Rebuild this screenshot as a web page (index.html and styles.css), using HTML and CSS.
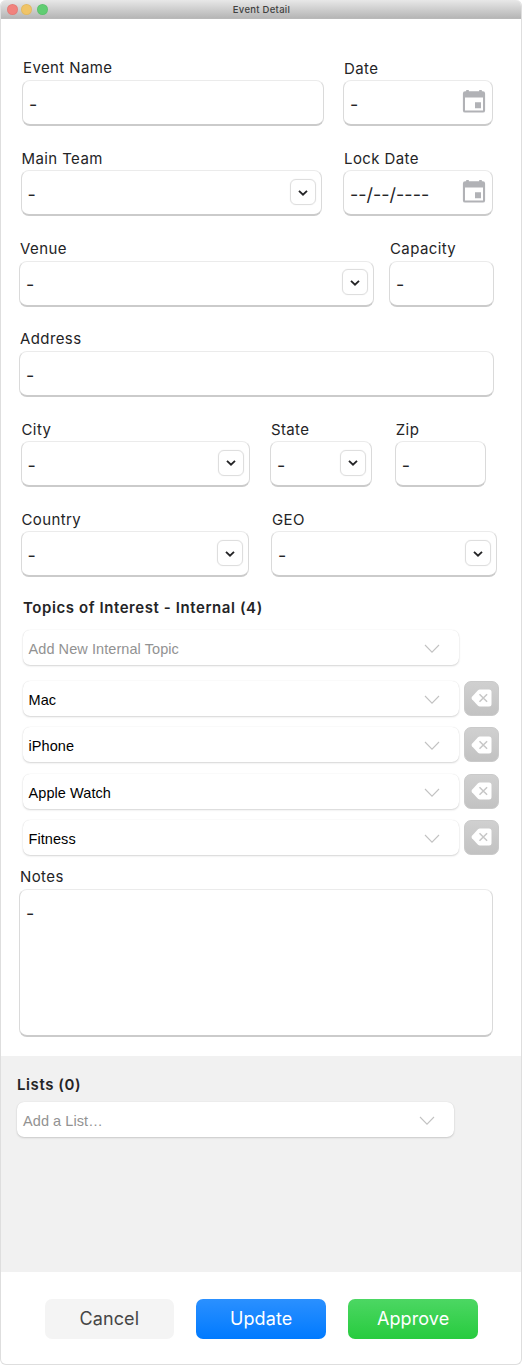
FILE: index.html
```
<!DOCTYPE html>
<html lang="en">
<head>
<meta charset="utf-8">
<title>Event Detail</title>
<link rel="stylesheet" href="styles.css">
</head>
<body>
<svg class="defs" aria-hidden="true">
  <symbol id="calendar" viewBox="0 0 24 24"><path fill="currentColor" d="M4.2 0.9h2.6v1.3h10.4V.9h2.6v1.3h1.1A2.2 2.2 0 0 1 23.1 4.4v17a2.2 2.2 0 0 1-2.2 2.2H3.1a2.2 2.2 0 0 1-2.2-2.2v-17a2.2 2.2 0 0 1 2.2-2.2h1.1zM3 8.5v13h18v-13zM13 13.3h6v6h-6z" fill-rule="evenodd"/></symbol>
  <symbol id="chevron-small" viewBox="0 0 10 6"><path d="M1 .9 5 4.6 9 .9" fill="none" stroke="currentColor" stroke-width="1.9"/></symbol>
  <symbol id="chevron" viewBox="0 0 16 10"><path d="M1 1 8 8.2 15 1" fill="none" stroke="currentColor" stroke-width="1.1"/></symbol>
  <symbol id="erase" viewBox="0 0 22 18"><path d="M8.8.5H18a2.5 2.5 0 0 1 2.5 2.5v12A2.5 2.5 0 0 1 18 17.5H8.8Q7.8 17.5 7 16.7L1 10.2Q0 9 1 7.8L7 1.3Q7.8.5 8.8.5z" fill="#fff"/><path d="m8.5 5.2 7.6 7.6m0-7.6-7.6 7.6" stroke="#c7c7c7" stroke-width="1.5"/></symbol>
</svg>
<div class="window">
  <header class="titlebar">
    <div class="lights"><i class="light close"></i><i class="light min"></i><i class="light max"></i></div>
    <span class="title">Event Detail</span>
  </header>
  <main class="form">
    <div class="row row-name">
      <div class="field name"><label>Event Name</label><div class="box">-</div></div>
      <div class="field date"><label>Date</label><div class="box">-<svg class="cal"><use href="#calendar"/></svg></div></div>
    </div>
    <div class="row row-team">
      <div class="field"><label>Main Team</label><div class="box">-<span class="drop"><svg><use href="#chevron-small"/></svg></span></div></div>
      <div class="field"><label>Lock Date</label><div class="box"><span class="mask">--/--/----</span><svg class="cal"><use href="#calendar"/></svg></div></div>
    </div>
    <div class="row row-venue">
      <div class="field"><label>Venue</label><div class="box">-<span class="drop"><svg><use href="#chevron-small"/></svg></span></div></div>
      <div class="field"><label>Capacity</label><div class="box">-</div></div>
    </div>
    <div class="row row-address">
      <div class="field"><label>Address</label><div class="box">-</div></div>
    </div>
    <div class="row row-city">
      <div class="field"><label>City</label><div class="box">-<span class="drop"><svg><use href="#chevron-small"/></svg></span></div></div>
      <div class="field"><label>State</label><div class="box">-<span class="drop"><svg><use href="#chevron-small"/></svg></span></div></div>
      <div class="field"><label>Zip</label><div class="box">-</div></div>
    </div>
    <div class="row row-country">
      <div class="field"><label>Country</label><div class="box">-<span class="drop"><svg><use href="#chevron-small"/></svg></span></div></div>
      <div class="field"><label>GEO</label><div class="box">-<span class="drop"><svg><use href="#chevron-small"/></svg></span></div></div>
    </div>
    <section class="topics">
      <h2>Topics of Interest - Internal (4)</h2>
      <div class="select placeholder">Add New Internal Topic<svg><use href="#chevron"/></svg></div>
      <ul class="topic-list">
        <li><div class="select">Mac<svg><use href="#chevron"/></svg></div><button class="remove"><svg><use href="#erase"/></svg></button></li>
        <li><div class="select">iPhone<svg><use href="#chevron"/></svg></div><button class="remove"><svg><use href="#erase"/></svg></button></li>
        <li><div class="select">Apple Watch<svg><use href="#chevron"/></svg></div><button class="remove"><svg><use href="#erase"/></svg></button></li>
        <li><div class="select">Fitness<svg><use href="#chevron"/></svg></div><button class="remove"><svg><use href="#erase"/></svg></button></li>
      </ul>
    </section>
    <div class="field notes"><label>Notes</label><div class="box">-</div></div>
  </main>
  <section class="lists">
    <h2>Lists (0)</h2>
    <div class="select placeholder">Add a List…<svg><use href="#chevron"/></svg></div>
  </section>
  <footer class="actions">
    <button class="btn cancel">Cancel</button>
    <button class="btn update">Update</button>
    <button class="btn approve">Approve</button>
  </footer>
</div>
</body>
</html>
```
FILE: styles.css
```
* { box-sizing: border-box; }
body { margin: 0; background: #fff; font-family: Inter, "Liberation Sans", sans-serif; color: #242426; }
.defs { position: absolute; width: 0; height: 0; }
.window { width: 522px; height: 1365px; border: 1px solid #dedede; border-top: 0; border-radius: 6px; overflow: hidden; display: flex; flex-direction: column; }

.titlebar { flex: none; height: 19px; margin: 0 -1px; display: grid; grid-template-columns: 60px 1fr 60px; align-items: center; background: linear-gradient(#e8e8e8, #b6b6b6); border-bottom: 1px solid #b9b9b9; }
.lights { display: flex; padding-left: 7px; }
.light { width: 11px; height: 11px; border-radius: 50%; border: 1px solid rgba(0, 0, 0, .05); }
.close { background: #f1827d; margin-right: 3px; }
.min { background: #f0c467; margin-right: 5px; }
.max { background: #60cd72; }
.title { font-size: 9.5px; font-weight: 500; letter-spacing: .28px; color: #404040; text-align: center; padding-left: 1px; }

.form { flex: none; height: 1036.5px; padding-top: 37px; }
.row { display: grid; margin-bottom: 20.3px; }
.row-name { grid-template-columns: 302px 150px; column-gap: 19px; padding-left: 21px; }
.row-team { grid-template-columns: 301.5px 150px; column-gap: 21px; padding-left: 19.5px; }
.row-venue { grid-template-columns: 355px 105.4px; column-gap: 15px; padding-left: 18px; }
.row-address { grid-template-columns: 475.4px; padding-left: 18px; }
.row-city { grid-template-columns: 229.9px 102.4px 91px; column-gap: 19.5px; padding-left: 19.5px; }
.row-city .field:last-child { margin-left: 3px; margin-right: -3px; }
.row-country { grid-template-columns: 228.5px 226px; column-gap: 22px; padding-left: 19.5px; }

.field label { display: block; height: 24px; padding: 2.5px 0 0 1px; font-size: 15px; line-height: 20px; letter-spacing: .4px; white-space: nowrap; }
.name label { padding-top: 2px; }
.date label { padding-top: 3px; }
.box { height: 46px; padding: 4.5px 6px 0 6px; display: flex; align-items: center; border: 1px solid #dadada; border-top-color: #ebebeb; border-bottom: 2px solid #cbcbcb; border-radius: 8px; background: #fff; font-size: 18px; line-height: 24px; }
.cal { width: 24px; height: 24px; margin: -8px 0 0 auto; color: #b1b2b6; }
.drop { width: 26px; height: 26px; margin: -6px -1px 0 auto; display: flex; align-items: center; justify-content: center; border: 1px solid #dedede; border-radius: 6px; box-shadow: 0 0 1px #ddd; }
.drop svg { width: 10px; height: 6px; margin-top: 1px; }
.mask { font-size: 18px; white-space: nowrap; }

h2 { margin: 0; font-size: 15px; line-height: 20px; font-weight: 600; letter-spacing: .58px; }
.topics { padding: .6px 0 0 21.5px; }
.topics h2 { padding-left: .5px; }
.select { width: 436.5px; height: 35px; padding: 3px 19px 0 6px; display: flex; align-items: center; justify-content: space-between; border-radius: 7px; background: #fff; box-shadow: 0 1px 2px rgba(0, 0, 0, .16), 0 0 1px rgba(0, 0, 0, .12); font: 14.5px/20px "Liberation Sans", Arial, sans-serif; letter-spacing: .07px; color: #000; }
.select svg { width: 16px; height: 10px; color: #c2c2c2; }
.placeholder { color: #929292; }
.topics > .select { margin-top: 11.5px; }
.topic-list { list-style: none; margin: 16px 0 0; padding: 0; display: grid; row-gap: 11.3px; }
.topic-list li { display: flex; gap: 5px; }
.topic-list li:nth-child(3) { margin: .5px 0 -.5px; }
.remove { width: 35px; height: 35px; padding: 0; display: flex; align-items: center; justify-content: center; border: 1px solid #cacaca; border-radius: 7px; background: linear-gradient(#d0d0d0, #c2c2c2); }
.remove svg { width: 22px; height: 18px; }
.notes { margin: 9.9px 0 0 18px; width: 474px; }
.notes .box { height: 148px; align-items: flex-start; padding-top: 12px; }

.lists { flex: none; height: 216.5px; padding: 19px 0 0 16px; background: #f1f1f1; }
.lists .select { margin-top: 7.5px; }

.actions { flex: 1; display: flex; gap: 22.5px; padding: 27px 0 0 43.6px; }
.btn { width: 129.4px; height: 40px; padding: 0; border: 0; border-radius: 7px; font: 18px/38px Inter, sans-serif; letter-spacing: .1px; color: #fff; }
.cancel { color: #464646; background: #f4f4f4; }
.update { background: linear-gradient(#2b90ff, #007aff); }
.approve { background: linear-gradient(#4cd763, #27cb3e); }
```
